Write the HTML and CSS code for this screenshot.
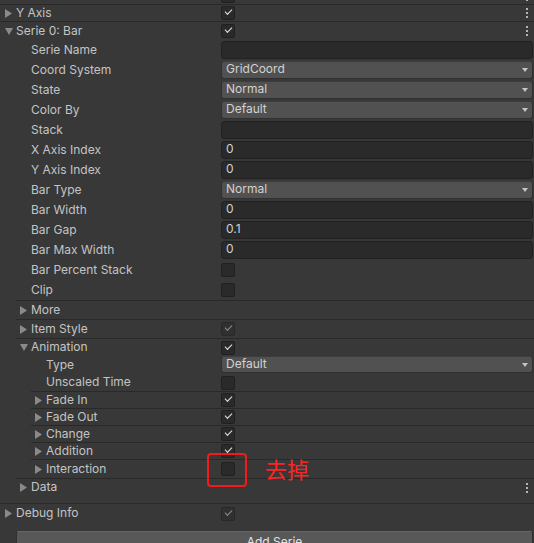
FILE: index.html
```html
<!DOCTYPE html>
<html>
	<head>
		<meta charset="UTF-8">
		<title>Inspector</title>
		<link rel="stylesheet" href="styles.css">
	</head>
	<body>
		<div class="panel">
			<!-- 上一行只露出底部 -->
			<div class="row fold l0 h17">
				<span class="arrow"></span>
				<span class="label"></span>
				<div class="value"><span class="check on"></span><span class="dots"></span></div>
			</div>
			<div class="row fold l0 h16">
				<span class="arrow"><svg width="7" height="9"><polygon points="0,0 7,4.5 0,9"/></svg></span>
				<span class="label">Y Axis</span>
				<div class="value"><span class="check on"></span><span class="dots"></span></div>
			</div>
			<div class="row fold l0 h18">
				<span class="arrow"><svg width="8" height="7"><polygon points="0,0 8,0 4,7"/></svg></span>
				<span class="label">Serie 0: Bar</span>
				<div class="value"><span class="check on"></span><span class="dots"></span></div>
			</div>

			<!-- serie props -->
			<div class="row l1"><span class="arrow"></span><span class="label">Serie Name</span><div class="value"><span class="field"></span></div></div>
			<div class="row l1"><span class="arrow"></span><span class="label">Coord System</span><div class="value"><span class="popup">GridCoord</span></div></div>
			<div class="row l1"><span class="arrow"></span><span class="label">State</span><div class="value"><span class="popup">Normal</span></div></div>
			<div class="row l1"><span class="arrow"></span><span class="label">Color By</span><div class="value"><span class="popup">Default</span></div></div>
			<div class="row l1"><span class="arrow"></span><span class="label">Stack</span><div class="value"><span class="field"></span></div></div>
			<div class="row l1"><span class="arrow"></span><span class="label">X Axis Index</span><div class="value"><span class="field">0</span></div></div>
			<div class="row l1"><span class="arrow"></span><span class="label">Y Axis Index</span><div class="value"><span class="field">0</span></div></div>
			<div class="row l1"><span class="arrow"></span><span class="label">Bar Type</span><div class="value"><span class="popup">Normal</span></div></div>
			<div class="row l1"><span class="arrow"></span><span class="label">Bar Width</span><div class="value"><span class="field">0</span></div></div>
			<div class="row l1"><span class="arrow"></span><span class="label">Bar Gap</span><div class="value"><span class="field">0.1</span></div></div>
			<div class="row l1"><span class="arrow"></span><span class="label">Bar Max Width</span><div class="value"><span class="field">0</span></div></div>
			<div class="row l1"><span class="arrow"></span><span class="label">Bar Percent Stack</span><div class="value"><span class="check"></span></div></div>
			<div class="row l1"><span class="arrow"></span><span class="label">Clip</span><div class="value"><span class="check"></span></div></div>

			<div class="row fold l1 h18">
				<span class="arrow"><svg width="7" height="9"><polygon points="0,0 7,4.5 0,9"/></svg></span>
				<span class="label">More</span>
				<div class="value"></div>
			</div>
			<div class="row fold l1 h18">
				<span class="arrow"><svg width="7" height="9"><polygon points="0,0 7,4.5 0,9"/></svg></span>
				<span class="label">Item Style</span>
				<div class="value"><span class="check on dim"></span></div>
			</div>
			<div class="row fold l1 h17">
				<span class="arrow"><svg width="8" height="7"><polygon points="0,0 8,0 4,7"/></svg></span>
				<span class="label">Animation</span>
				<div class="value"><span class="check on"></span></div>
			</div>

			<!-- animation props -->
			<div class="row l2 h18"><span class="arrow"></span><span class="label">Type</span><div class="value top"><span class="popup">Default</span></div></div>
			<div class="row l2 h17"><span class="arrow"></span><span class="label">Unscaled Time</span><div class="value"><span class="check"></span></div></div>

			<div class="row fold l2 h16">
				<span class="arrow"><svg width="7" height="9"><polygon points="0,0 7,4.5 0,9"/></svg></span>
				<span class="label">Fade In</span>
				<div class="value"><span class="check on"></span></div>
			</div>
			<div class="row fold l2 h16">
				<span class="arrow"><svg width="7" height="9"><polygon points="0,0 7,4.5 0,9"/></svg></span>
				<span class="label">Fade Out</span>
				<div class="value"><span class="check on"></span></div>
			</div>
			<div class="row fold l2 h16">
				<span class="arrow"><svg width="7" height="9"><polygon points="0,0 7,4.5 0,9"/></svg></span>
				<span class="label">Change</span>
				<div class="value"><span class="check on"></span></div>
			</div>
			<div class="row fold l2 h16">
				<span class="arrow"><svg width="7" height="9"><polygon points="0,0 7,4.5 0,9"/></svg></span>
				<span class="label">Addition</span>
				<div class="value"><span class="check on"></span></div>
			</div>
			<div class="row fold l2 h18">
				<span class="arrow"><svg width="7" height="9"><polygon points="0,0 7,4.5 0,9"/></svg></span>
				<span class="label">Interaction</span>
				<div class="value"><span class="check"></span></div>
			</div>

			<div class="row fold l1 data">
				<span class="arrow"><svg width="7" height="9"><polygon points="0,0 7,4.5 0,9"/></svg></span>
				<span class="label">Data</span>
				<div class="value"><span class="dots"></span></div>
			</div>
			<div class="row fold l0 h19">
				<span class="arrow"><svg width="7" height="9"><polygon points="0,0 7,4.5 0,9"/></svg></span>
				<span class="label">Debug Info</span>
				<div class="value"><span class="check on dim"></span></div>
			</div>

			<div class="button">Add Serie</div>
		</div>

		<!-- 标注 -->
		<div class="mark"></div>
		<div class="mark-text">去掉</div>
	</body>
</html>
```

FILE: styles.css
```css
* {
	margin: 0;
	padding: 0;
	box-sizing: border-box;
}

html, body {
	height: 100%;
}

body {
	background-color: #383838;
	color: #c4c4c4;
	font: 12px "Inter", "Liberation Sans", sans-serif;
	overflow: hidden;
	position: relative;
}

.panel {
	margin-top: -14px;
}

.row {
	display: flex;
	align-items: center;
	height: 20px;
	padding: 0 1px 0 4px;
}

.row.fold {
	border-top: 1px solid #292929;
	box-sizing: content-box;
}

.row.fold.h16 { height: 16px; }
.row.fold.h17 { height: 17px; }
.row.fold.h18 { height: 18px; }
.row.fold.h19 { height: 19px; }

.row.h17 { height: 17px; }
.row.h18 { height: 18px; }

.l0 {
	padding-left: 5px;
}

.l1 {
	margin-left: 16px;
}

.l2 {
	margin-left: 31px;
}

.row.data {
	height: 17px;
	padding-bottom: 7px;
	box-sizing: content-box;
}

.arrow {
	width: 11px;
	flex: none;
	display: flex;
	align-items: center;
}

.arrow svg {
	fill: #8a8a8a;
	display: block;
}

.label {
	flex: 1;
	white-space: nowrap;
	overflow: hidden;
	padding-bottom: 2px;
}

.value {
	width: 312px;
	height: 100%;
	flex: none;
	display: flex;
	align-items: center;
}

.value.top {
	align-items: flex-start;
}

.check {
	width: 14px;
	height: 14px;
	flex: none;
	background-color: #2a2a2a;
	border: 1px solid #202020;
	border-radius: 2px;
	position: relative;
}

.check.on::after {
	content: "";
	position: absolute;
	left: 3px;
	top: 2px;
	width: 6px;
	height: 3px;
	border-left: 1.6px solid #e6e6e6;
	border-bottom: 1.6px solid #e6e6e6;
	transform: rotate(-45deg);
	transform-origin: center;
}

.check.dim {
	background-color: #303030;
	border-color: #282828;
}

.check.dim::after {
	border-color: #8e8e8e;
	border-width: 0 0 1.3px 1.3px;
}

.field, .popup {
	display: block;
	width: 100%;
	height: 18px;
	line-height: 14px;
	padding-left: 4px;
	border-radius: 3px;
	color: #d2d2d2;
	white-space: nowrap;
}

.field {
	background-color: #2a2a2a;
	border: 1px solid #212121;
}

.popup {
	background-color: #515151;
	border: 1px solid #303030;
	border-top-color: #3d3d3d;
	position: relative;
}

.value.top .popup {
	height: 17px;
	line-height: 14px;
}

.popup::after {
	content: "";
	position: absolute;
	right: 4px;
	top: 6px;
	border-left: 3.5px solid transparent;
	border-right: 3.5px solid transparent;
	border-top: 4px solid #c4c4c4;
}

.dots {
	width: 2px;
	height: 2px;
	margin-left: auto;
	margin-right: 5px;
	margin-top: -8px;
	background-color: #b4b4b4;
	box-shadow: 0 4px 0 #b4b4b4, 0 8px 0 #b4b4b4;
}

.row.data .dots {
	margin-top: -7px;
}

.button {
	margin: 8px 1px 0 16px;
	height: 22px;
	line-height: 20px;
	background-color: #585858;
	border-radius: 3px;
	border: 1px solid #303030;
	border-top-color: #656565;
	color: #e4e4e4;
	text-align: center;
}

.mark {
	position: absolute;
	left: 207px;
	top: 453px;
	width: 40px;
	height: 34px;
	border: 2px solid #f21a1a;
	border-radius: 4px;
}

.mark-text {
	position: absolute;
	left: 265px;
	top: 453px;
	font: 22px/30px "Noto Sans CJK SC", sans-serif;
	color: #ff2424;
}
```
